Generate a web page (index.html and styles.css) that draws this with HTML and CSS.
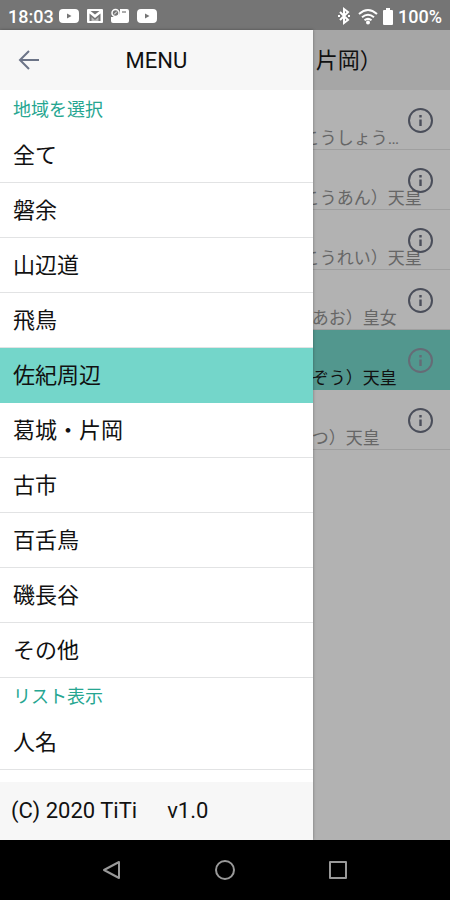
FILE: index.html
```html
<!DOCTYPE html>
<html lang="ja">
<head>
<meta charset="utf-8">
<meta name="viewport" content="width=device-width, initial-scale=1">
<title>MENU</title>
<link rel="stylesheet" href="styles.css">
</head>
<body>
<svg class="defs" aria-hidden="true">
  <symbol id="info" viewBox="0 0 26 26">
    <circle cx="13.500" cy="13.500" r="11.500" fill="none" stroke="currentColor" stroke-width="2"/>
    <path d="M12.300 8h2.400v2.400h-2.400zM12.300 12.400h2.400V19h-2.400z" fill="currentColor"/>
  </symbol>
  <symbol id="video" viewBox="0 0 20 16">
    <path fill="#fff" fill-rule="evenodd" d="M4 1h12q4 0 4 4v6q0 4-4 4H4q-4 0-4-4V5q0-4 4-4zM8 5.500v5l4.500-2.500z"/>
  </symbol>
</svg>
<div class="status">
  <div class="status-group">
    <span>18:03</span>
    <svg class="video" aria-hidden="true"><use href="#video"/></svg>
    <svg class="mail" viewBox="0 0 16 14" aria-hidden="true"><rect width="16" height="14" rx="1" fill="#fff"/><path d="M2.500 12V4.500L8 9l5.500-4.500V12z" fill="#757575"/><path d="M3.500 2h9L8 5.500z" fill="#757575"/><path d="M4.500 12V8L8 11l3.500-3v4z" fill="#fff" opacity=".5"/></svg>
    <svg class="card" viewBox="0 0 18 16" aria-hidden="true"><path d="M9 1h7q2 0 2 2v10q0 2-2 2H2q-2 0-2-2V9h5q4-2 4-5z" fill="#fff"/><circle cx="4.500" cy="5" r="3.500" fill="none" stroke="#fff" stroke-width="1.500"/><path d="M3 6.500l3-3" stroke="#fff"/><path d="M11 4h4" stroke="#757575" stroke-width="1.200"/></svg>
    <svg class="video" aria-hidden="true"><use href="#video"/></svg>
  </div>
  <div class="status-group status-right">
    <svg class="bluetooth" viewBox="0 0 12 18" aria-hidden="true"><path d="M2 5l8 8-4 3V2l4 3-8 8" fill="none" stroke="#fff" stroke-width="2"/><path d="M0 8h2v2H0zM10 8h2v2h-2z" fill="#fff"/></svg>
    <svg class="wifi" viewBox="0 0 20 17" aria-hidden="true"><g fill="none" stroke="#fff" stroke-width="2"><path d="M1 6Q10-2 19 6"/><path d="M4 9.300q6-5 12 0"/><path d="M6.500 12.300q3.500-2.800 7 0"/></g><circle cx="10" cy="14.500" r="2" fill="#fff"/></svg>
    <svg class="battery" viewBox="0 0 10 17" aria-hidden="true"><path d="M3 0h4v2h2q1 0 1 1v13q0 1-1 1H1q-1 0-1-1V3q0-1 1-1h2z" fill="#fff"/></svg>
    <span>100%</span>
  </div>
</div>

<div class="stage">
  <main class="page">
    <header class="page-head"><h1>片岡）</h1></header>
    <ul class="people">
      <li><span class="name">こうしょう…</span><button type="button" aria-label="詳細"><svg><use href="#info"/></svg></button></li>
      <li><span class="name">こうあん）天皇</span><button type="button" aria-label="詳細"><svg><use href="#info"/></svg></button></li>
      <li><span class="name">こうれい）天皇</span><button type="button" aria-label="詳細"><svg><use href="#info"/></svg></button></li>
      <li class="short"><span class="name">あお）皇女</span><button type="button" aria-label="詳細"><svg><use href="#info"/></svg></button></li>
      <li class="short current"><span class="name">ぞう）天皇</span><button type="button" aria-label="詳細"><svg><use href="#info"/></svg></button></li>
      <li class="short"><span class="name">つ）天皇</span><button type="button" aria-label="詳細"><svg><use href="#info"/></svg></button></li>
    </ul>
  </main>

  <aside class="drawer">
    <header class="drawer-head">
      <button class="back" type="button" aria-label="戻る"><svg viewBox="0 0 22 22"><path d="M21 11H2M11 2l-9 9 9 9" fill="none" stroke="currentColor" stroke-width="2"/></svg></button>
      <h2>MENU</h2>
    </header>
    <nav class="menu">
      <h3>地域を選択</h3>
      <a href="#">全て</a>
      <a href="#">磐余</a>
      <a href="#">山辺道</a>
      <a href="#">飛鳥</a>
      <a href="#" class="selected" aria-current="true">佐紀周辺</a>
      <a href="#">葛城・片岡</a>
      <a href="#">古市</a>
      <a href="#">百舌鳥</a>
      <a href="#">磯長谷</a>
      <a href="#">その他</a>
      <h3>リスト表示</h3>
      <a href="#">人名</a>
    </nav>
    <footer class="drawer-foot"><span>(C) 2020 TiTi</span><span>v1.0</span></footer>
  </aside>
</div>

<div class="system">
  <button type="button" aria-label="戻る"><svg viewBox="0 0 20 20"><path d="M17 2v16L2 10z"/></svg></button>
  <button type="button" aria-label="ホーム"><svg viewBox="0 0 20 20"><circle cx="10" cy="10" r="9"/></svg></button>
  <button type="button" aria-label="履歴"><svg viewBox="0 0 20 20"><rect x="2" y="2" width="16" height="16"/></svg></button>
</div>
</body>
</html>
```

FILE: styles.css
```css
* { box-sizing: border-box; }

body {
  margin: 0;
  min-height: 100vh;
  display: flex;
  flex-direction: column;
  font-family: Roboto, "Noto Sans CJK JP", sans-serif;
  font-size: 22px;
  color: #111;
}

h1, h2, h3, ul { margin: 0; padding: 0; font-weight: 400; }
ul { list-style: none; }
button { border: 0; padding: 0; background: none; color: inherit; display: flex; }
svg { display: block; flex: none; overflow: visible; }
symbol { overflow: visible; }
.defs { position: absolute; width: 0; height: 0; }

.status {
  height: 30px;
  padding: 2px 8px 0;
  display: flex;
  justify-content: space-between;
  background: #757575;
  color: #fff;
  font-size: 18px;
  font-weight: 500;
}
.status-group { display: flex; align-items: center; gap: 8px; }
.status-group span { margin-right: -3px; }
.status-right { gap: 5px; }
.status-right span { margin-right: 0; }
.video { width: 20px; height: 16px; }
.mail { width: 16px; height: 14px; }
.card { width: 18px; height: 16px; }
.bluetooth { width: 12px; height: 18px; }
.wifi { width: 20px; height: 17px; margin-left: 3px; }
.battery { width: 10px; height: 17px; }

.stage { flex: 1; display: grid; --drawer: 69.5%; }
.page, .drawer { grid-area: 1 / 1; }

.page { background: #b2b2b2; overflow: hidden; }
.page-head {
  height: 60px;
  padding: 0 0 4px calc(var(--drawer) + 3px);
  display: flex;
  align-items: center;
  background: #a6a6a6;
}
.page-head h1 { font-size: 22px; white-space: nowrap; }

.people li {
  position: relative;
  height: 60px;
  padding: 0 0 0 calc(var(--drawer) - 10px);
  display: flex;
  align-items: flex-end;
  border-bottom: 1px solid #9f9f9f;
  color: #666;
}
.people .short { padding-left: calc(var(--drawer) - 1px); }
.people .current { background: #52978e; color: #111; border-color: #52978e; }
.name { font-size: 17px; line-height: 21px; white-space: nowrap; }
.people button {
  position: absolute;
  right: 17px;
  top: 17px;
  color: #4a4e5a;
}
.people .current button { color: #666b76; }
.people svg { width: 26px; height: 26px; }

.drawer {
  width: var(--drawer);
  display: flex;
  flex-direction: column;
  background: #fff;
  box-shadow: 0 0 3px rgba(0, 0, 0, .35);
  z-index: 1;
}
.drawer-head {
  height: 60px;
  padding: 0 18px;
  display: grid;
  grid-template-columns: 22px 1fr 22px;
  align-items: center;
  background: #f7f7f7;
}
.drawer-head h2 { font-size: 22px; text-align: center; }
.back { color: #6c7487; }
.back svg { width: 22px; height: 22px; }

.menu { flex: 1; padding-top: 1px; }
.menu h3 {
  height: 37px;
  padding-left: 13px;
  font-size: 18px;
  line-height: 38px;
  color: #26a691;
}
.menu a {
  display: block;
  height: 55px;
  padding-left: 13px;
  line-height: 56px;
  border-bottom: 1px solid #e2e3e4;
  color: inherit;
  text-decoration: none;
}
.menu .selected { background: #74d6ca; border-color: #74d6ca; }

.drawer-foot {
  height: 58px;
  padding: 0 0 2px 11px;
  display: flex;
  align-items: center;
  gap: 30px;
  background: #f7f7f7;
}

.system {
  height: 60px;
  display: flex;
  justify-content: center;
  align-items: center;
  gap: 93px;
  background: #000;
}
.system svg { width: 20px; height: 20px; fill: none; stroke: #999; stroke-width: 2; stroke-linejoin: round; }
```
